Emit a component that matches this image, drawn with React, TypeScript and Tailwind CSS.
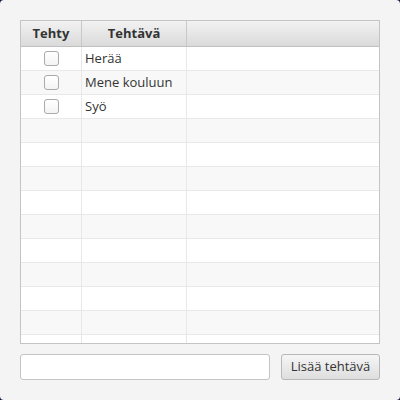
import React from 'react';

const tasks = ['Herää', 'Mene kouluun', 'Syö'];
const rowCount = 13;

export default function App() {
  const rows = Array.from({ length: rowCount }, (_, i) => tasks[i]);

  return (
    <div className="w-[400px] h-[400px] bg-[#0b1a3a]" style={{ fontFamily: '"Open Sans", "Noto Sans", sans-serif' }}>
      <div className="w-full h-full rounded-[4px] bg-[#f4f4f4] px-[20px] pt-[20px] pb-[20px] flex flex-col">
        {/* Table */}
        <div className="h-[324px] border border-[#c4c4c4] bg-white overflow-hidden flex flex-col">
          {/* Header */}
          <div className="flex h-[26px] shrink-0 border-b border-[#c0c0c0] bg-gradient-to-b from-[#f2f2f2] to-[#dadada] text-[13px] font-bold text-[#333]">
            <div className="w-[61px] flex items-center justify-center border-r border-[#c8c8c8]">Tehty</div>
            <div className="w-[105px] flex items-center justify-center border-r border-[#c8c8c8]">Tehtävä</div>
            <div className="flex-1" />
          </div>
          {/* Rows */}
          {rows.map((task, i) => (
            <div
              key={i}
              className={`flex h-[24px] shrink-0 border-b border-[#e8e8e8] ${i % 2 === 0 ? 'bg-white' : 'bg-[#f8f8f8]'}`}
            >
              <div className="w-[61px] flex items-center justify-center border-r border-[#e8e8e8]">
                {task && (
                  <div className="w-[15px] h-[15px] rounded-[3px] border border-[#aaa] bg-gradient-to-b from-white to-[#f4f4f4]" />
                )}
              </div>
              <div className="w-[105px] flex items-center pl-[3px] border-r border-[#e8e8e8] text-[13px] text-[#333]">
                {task}
              </div>
              <div className="flex-1" />
            </div>
          ))}
        </div>
        {/* Bottom bar */}
        <div className="flex items-center mt-[10px] gap-[11px]">
          <input
            className="w-[250px] h-[26px] rounded-[3px] border border-[#c4c4c4] bg-white outline-none px-2 text-[13px]"
            type="text"
          />
          <button className="flex-1 h-[26px] rounded-[3px] border border-[#b8b8b8] bg-gradient-to-b from-[#f6f6f6] to-[#dedede] text-[13px] text-[#333]">
            Lisää tehtävä
          </button>
        </div>
      </div>
    </div>
  );
}
